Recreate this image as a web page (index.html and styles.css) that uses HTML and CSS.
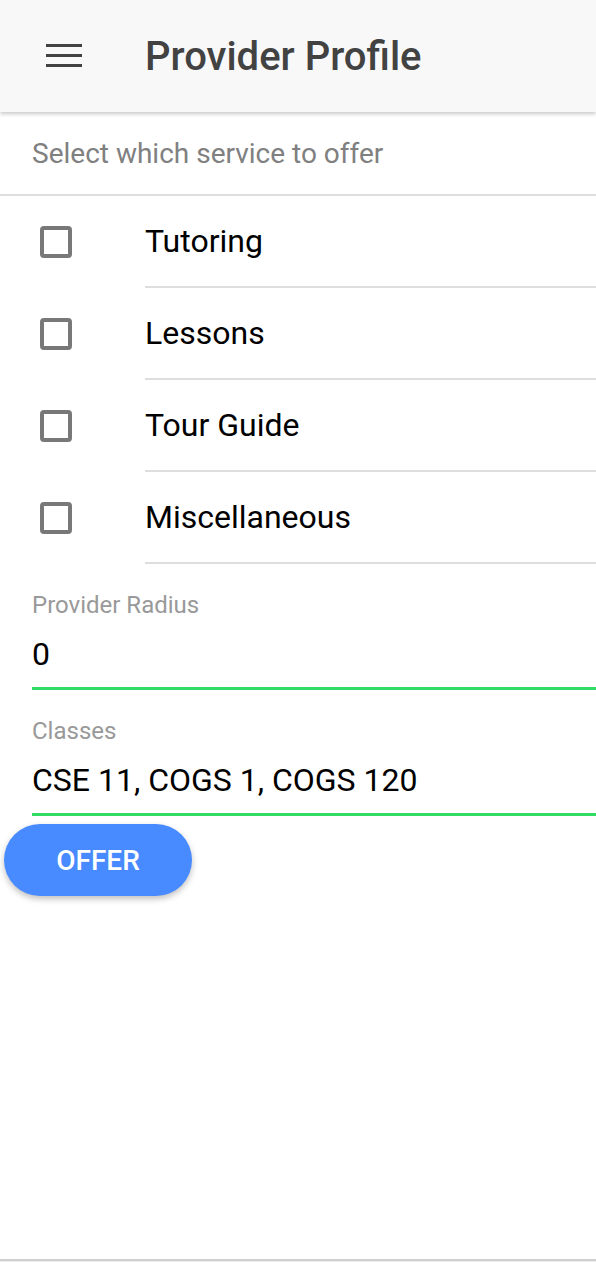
FILE: index.html
```html
<!DOCTYPE html>
<html lang="en">
<head>
<meta charset="utf-8">
<title>Provider Profile</title>
<link rel="stylesheet" href="styles.css">
</head>
<body>
<div class="app">
  <header class="toolbar">
    <button class="menu-btn" aria-label="menu">
      <svg width="36" height="24" viewBox="0 0 36 24"><rect x="0" y="0" width="36" height="3" fill="#424242"/><rect x="0" y="10" width="36" height="3" fill="#424242"/><rect x="0" y="20" width="36" height="3" fill="#424242"/></svg>
    </button>
    <h1 class="title">Provider Profile</h1>
  </header>
  <main class="content">
    <div class="list-header">Select which service to offer</div>
    <ul class="service-list">
      <li class="service-item"><span class="checkbox"></span><span class="item-label">Tutoring</span></li>
      <li class="service-item"><span class="checkbox"></span><span class="item-label">Lessons</span></li>
      <li class="service-item"><span class="checkbox"></span><span class="item-label">Tour Guide</span></li>
      <li class="service-item"><span class="checkbox"></span><span class="item-label">Miscellaneous</span></li>
    </ul>
    <div class="field">
      <div class="field-inner">
        <div class="field-label">Provider Radius</div>
        <div class="field-value">0</div>
      </div>
    </div>
    <div class="field">
      <div class="field-inner">
        <div class="field-label">Classes</div>
        <div class="field-value">CSE 11, COGS 1, COGS 120</div>
      </div>
    </div>
    <button class="offer-btn">OFFER</button>
  </main>
  <footer class="bottom-bar"></footer>
</div>
</body>
</html>
```
FILE: styles.css
```css
* { box-sizing: border-box; }
html, body { margin: 0; padding: 0; }
body {
  font-family: Roboto, "Noto Sans", sans-serif;
  background: #ffffff;
  color: #000;
}
.app {
  display: flex;
  flex-direction: column;
  min-height: 1262px;
}
.toolbar {
  height: 112px;
  background: #f8f8f8;
  display: flex;
  align-items: center;
  box-shadow: 0 2px 4px rgba(0,0,0,0.22);
  position: relative;
  z-index: 2;
}
.menu-btn {
  border: 0;
  background: transparent;
  padding: 0;
  margin-left: 46px;
  width: 36px;
  height: 24px;
  display: flex;
}
.title {
  margin: 2px 0 0 63px;
  font-size: 40px;
  font-weight: 500;
  color: #424242;
  line-height: 1;
}
.content { flex: 1; }
.list-header {
  height: 84px;
  padding-left: 32px;
  display: flex;
  align-items: center;
  font-size: 28px;
  color: #808080;
  border-bottom: 2px solid #dedede;
}
.service-list { list-style: none; margin: 0; padding: 0; }
.service-item {
  height: 92px;
  display: flex;
  align-items: center;
}
.checkbox {
  width: 32px;
  height: 32px;
  margin-left: 40px;
  margin-right: 73px;
  border: 4px solid #787878;
  border-radius: 4px;
  flex: none;
}
.item-label {
  flex: 1;
  align-self: stretch;
  display: flex;
  align-items: center;
  font-size: 32px;
  border-bottom: 2px solid #dedede;
}
.field { padding-left: 32px; }
.field-inner {
  border-bottom: 3px solid #32db64;
  padding-top: 29px;
  padding-bottom: 17px;
}
.field-label {
  font-size: 24px;
  line-height: 24px;
  color: #999999;
}
.field-value {
  margin-top: 21px;
  font-size: 32px;
  line-height: 32px;
  color: #000;
}
.offer-btn {
  display: block;
  margin: 8px 0 0 4px;
  width: 188px;
  height: 72px;
  border: 0;
  border-radius: 36px;
  background: #488aff;
  color: #fff;
  font-family: Roboto, "Noto Sans", sans-serif;
  font-size: 28px;
  font-weight: 500;
  box-shadow: 0 3px 6px rgba(0,0,0,0.25);
}
.bottom-bar {
  height: 3px;
  border-top: 2px solid #cfcfcf;
  background: #ececec;
}
```
